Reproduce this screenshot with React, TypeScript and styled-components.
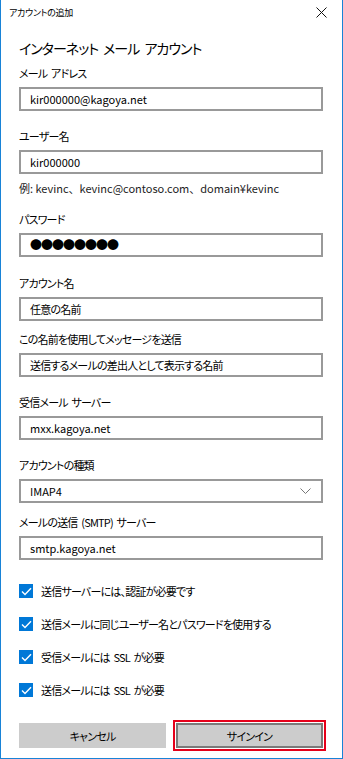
import React from "react";
import styled, { createGlobalStyle } from "styled-components";

const GlobalStyle = createGlobalStyle`
  html, body { margin: 0; padding: 0; background: #ffffff; }
  body {
    font-family: "Noto Sans CJK JP", "Noto Sans", sans-serif;
    font-feature-settings: "palt";
    color: #000000;
  }
  * { box-sizing: border-box; }
`;

const Window = styled.div`
  width: 343px;
  height: 759px;
  background: #ffffff;
  border: 1px solid #1883d7;
  border-top: none;
  display: flex;
  flex-direction: column;
`;

const TitleBar = styled.div`
  height: 25px;
  display: flex;
  align-items: center;
  justify-content: space-between;
  padding: 0 15px 0 8px;
  font-size: 9px;
  line-height: 12px;
  letter-spacing: -0.3px;
`;

const CloseIcon = styled.svg`
  width: 11px;
  height: 11px;
  display: block;
`;

const Content = styled.div`
  padding: 0 19px 0 18px;
  display: flex;
  flex-direction: column;
`;

const Heading = styled.div`
  margin-top: 13px;
  font-size: 14px;
  line-height: 20px;
  letter-spacing: -1px;
  word-spacing: 3px;
`;

const Label = styled.div<{ $mt: number }>`
  margin-top: ${(p) => p.$mt}px;
  font-size: 11px;
  line-height: 16px;
  letter-spacing: -0.8px;
  word-spacing: 2px;
`;

const Field = styled.div<{ $cjk?: boolean }>`
  margin-top: 6px;
  height: 24px;
  border: 2px solid #999999;
  display: flex;
  align-items: center;
  padding: 0 10px 0 9px;
  font-size: 11px;
  line-height: 16px;
  justify-content: space-between;
  letter-spacing: ${(p) => (p.$cjk ? "-0.8px" : "0")};
`;

const Dots = styled.span`
  font-size: 12px;
  letter-spacing: -1px;
  font-feature-settings: normal;
`;

const Hint = styled.div`
  margin-top: 6px;
  font-size: 11px;
  line-height: 16px;
  color: #222;
  font-feature-settings: normal;
`;

const Chevron = styled.svg`
  width: 11px;
  height: 6px;
  display: block;
`;

const Checks = styled.div`
  margin-top: 24px;
  display: flex;
  flex-direction: column;
  gap: 19px;
`;

const CheckRow = styled.div`
  display: flex;
  align-items: center;
  gap: 8px;
  height: 14px;
  font-size: 11px;
  line-height: 16px;
  letter-spacing: -0.8px;
  word-spacing: 2px;
`;

const Box = styled.span`
  width: 14px;
  height: 14px;
  flex: none;
  background: #0078d7;
  display: flex;
  align-items: center;
  justify-content: center;
`;

const Buttons = styled.div`
  margin-top: 26px;
  display: grid;
  grid-template-columns: 1fr 1fr;
  gap: 10px;
`;

const Button = styled.div<{ $primary?: boolean }>`
  height: 25px;
  background: #cccccc;
  border: 2px solid ${(p) => (p.$primary ? "#7a7a7a" : "#cccccc")};
  display: flex;
  align-items: center;
  justify-content: center;
  font-size: 11px;
  line-height: 16px;
  letter-spacing: -0.8px;
  ${(p) => (p.$primary ? "outline: 2px solid #e5001a; outline-offset: 1px;" : "")}
`;

const Check = () => (
  <svg width="11" height="9" viewBox="0 0 11 9">
    <path d="M1 4.6 L4 7.6 L10 1.2" fill="none" stroke="#fff" strokeWidth="1.4" />
  </svg>
);

type Group = {
  label: string;
  value: React.ReactNode;
  mt: number;
  select?: boolean;
  hint?: string;
  cjk?: boolean;
};

const groups: Group[] = [
  { label: "メール アドレス", value: "kir000000@kagoya.net", mt: 7 },
  { label: "ユーザー名", value: "kir000000", mt: 17, hint: "例: kevinc、kevinc@contoso.com、domain¥kevinc" },
  { label: "パスワード", value: <Dots>●●●●●●●●</Dots>, mt: 15 },
  { label: "アカウント名", value: "任意の名前", mt: 18, cjk: true },
  { label: "この名前を使用してメッセージを送信", value: "送信するメールの差出人として表示する名前", mt: 10, cjk: true },
  { label: "受信メール サーバー", value: "mxx.kagoya.net", mt: 17 },
  { label: "アカウントの種類", value: "IMAP4", mt: 17, select: true },
  { label: "メールの送信 (SMTP) サーバー", value: "smtp.kagoya.net", mt: 11 },
];

const checks = [
  "送信サーバーには、認証が必要です",
  "送信メールに同じユーザー名とパスワードを使用する",
  "受信メールには SSL が必要",
  "送信メールには SSL が必要",
];

export default function App() {
  return (
    <>
      <GlobalStyle />
      <Window>
        <TitleBar>
          <span>アカウントの追加</span>
          <CloseIcon viewBox="0 0 11 11">
            <path d="M0.5 0.5 L10.5 10.5 M10.5 0.5 L0.5 10.5" stroke="#111" strokeWidth="1" />
          </CloseIcon>
        </TitleBar>
        <Content>
          <Heading>インターネット メール アカウント</Heading>
          {groups.map((g) => (
            <React.Fragment key={g.label}>
              <Label $mt={g.mt}>{g.label}</Label>
              <Field $cjk={g.cjk}>
                <span>{g.value}</span>
                {g.select && (
                  <Chevron viewBox="0 0 11 6">
                    <path d="M0.5 0.5 L5.5 5.5 L10.5 0.5" fill="none" stroke="#777" strokeWidth="1" />
                  </Chevron>
                )}
              </Field>
              {g.hint && <Hint>{g.hint}</Hint>}
            </React.Fragment>
          ))}
          <Checks>
            {checks.map((c) => (
              <CheckRow key={c}>
                <Box>
                  <Check />
                </Box>
                <span>{c}</span>
              </CheckRow>
            ))}
          </Checks>
          <Buttons>
            <Button>キャンセル</Button>
            <Button $primary>サインイン</Button>
          </Buttons>
        </Content>
      </Window>
    </>
  );
}
